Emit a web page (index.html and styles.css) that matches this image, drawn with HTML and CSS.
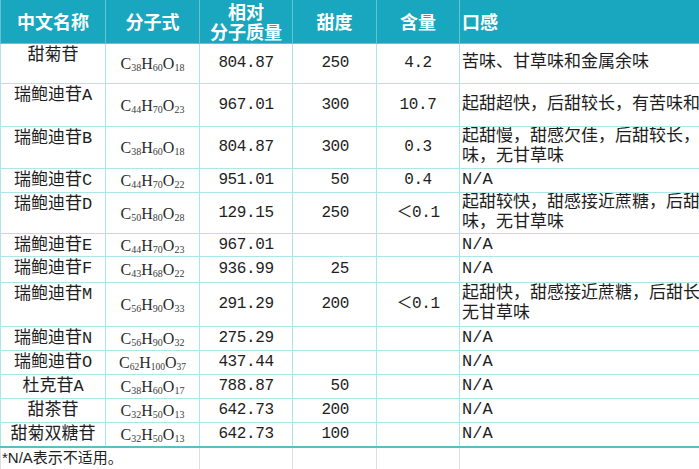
FILE: index.html
```html
<!DOCTYPE html>
<html lang="zh">
<head>
<meta charset="utf-8">
<link rel="stylesheet" href="styles.css">
</head>
<body>
<table class="tbl">
  <colgroup>
    <col class="c-name"><col class="c-formula"><col class="c-mass"><col class="c-sweet"><col class="c-amount"><col class="c-taste">
  </colgroup>
  <thead>
    <tr class="r43 head">
      <th>中文名称</th>
      <th>分子式</th>
      <th class="two">相对<br>分子质量</th>
      <th>甜度</th>
      <th>含量</th>
      <th class="left">口感</th>
    </tr>
  </thead>
  <tbody>
    <tr class="r40">
      <td class="name">甜菊苷</td>
      <td class="f">C<sub>38</sub>H<sub>60</sub>O<sub>18</sub></td>
      <td class="num">804.87</td>
      <td class="sw">250</td>
      <td class="num">4.2</td>
      <td class="taste">苦味、甘草味和金属余味</td>
    </tr>
    <tr class="r43">
      <td class="name">瑞鲍迪苷A</td>
      <td class="f">C<sub>44</sub>H<sub>70</sub>O<sub>23</sub></td>
      <td class="num">967.01</td>
      <td class="sw">300</td>
      <td class="num">10.7</td>
      <td class="taste">起甜超快，后甜较长，有苦味和甘草味</td>
    </tr>
    <tr class="r42">
      <td class="name">瑞鲍迪苷B</td>
      <td class="f">C<sub>38</sub>H<sub>60</sub>O<sub>18</sub></td>
      <td class="num">804.87</td>
      <td class="sw">300</td>
      <td class="num">0.3</td>
      <td class="taste two-line">起甜慢，甜感欠佳，后甜较长，有苦<br>味，无甘草味</td>
    </tr>
    <tr class="r24">
      <td class="name">瑞鲍迪苷C</td>
      <td class="f">C<sub>44</sub>H<sub>70</sub>O<sub>22</sub></td>
      <td class="num">951.01</td>
      <td class="sw">50</td>
      <td class="num">0.4</td>
      <td class="taste">N/A</td>
    </tr>
    <tr class="r41">
      <td class="name">瑞鲍迪苷D</td>
      <td class="f">C<sub>50</sub>H<sub>80</sub>O<sub>28</sub></td>
      <td class="num">129.15</td>
      <td class="sw">250</td>
      <td class="num">＜0.1</td>
      <td class="taste two-line">起甜较快，甜感接近蔗糖，后甜较长，无苦<br>味，无甘草味</td>
    </tr>
    <tr class="r23">
      <td class="name">瑞鲍迪苷E</td>
      <td class="f">C<sub>44</sub>H<sub>70</sub>O<sub>23</sub></td>
      <td class="num">967.01</td>
      <td class="sw"></td>
      <td class="num"></td>
      <td class="taste">N/A</td>
    </tr>
    <tr class="r26">
      <td class="name">瑞鲍迪苷F</td>
      <td class="f">C<sub>43</sub>H<sub>68</sub>O<sub>22</sub></td>
      <td class="num">936.99</td>
      <td class="sw">25</td>
      <td class="num"></td>
      <td class="taste">N/A</td>
    </tr>
    <tr class="r44">
      <td class="name">瑞鲍迪苷M</td>
      <td class="f">C<sub>56</sub>H<sub>90</sub>O<sub>33</sub></td>
      <td class="num">291.29</td>
      <td class="sw">200</td>
      <td class="num">＜0.1</td>
      <td class="taste two-line">起甜快，甜感接近蔗糖，后甜长，无苦味，<br>无甘草味</td>
    </tr>
    <tr class="r24">
      <td class="name">瑞鲍迪苷N</td>
      <td class="f">C<sub>56</sub>H<sub>90</sub>O<sub>32</sub></td>
      <td class="num">275.29</td>
      <td class="sw"></td>
      <td class="num"></td>
      <td class="taste">N/A</td>
    </tr>
    <tr class="r24">
      <td class="name">瑞鲍迪苷O</td>
      <td class="f f-long">C<sub>62</sub>H<sub>100</sub>O<sub>37</sub></td>
      <td class="num">437.44</td>
      <td class="sw"></td>
      <td class="num"></td>
      <td class="taste">N/A</td>
    </tr>
    <tr class="r24">
      <td class="name">杜克苷A</td>
      <td class="f">C<sub>38</sub>H<sub>60</sub>O<sub>17</sub></td>
      <td class="num">788.87</td>
      <td class="sw">50</td>
      <td class="num"></td>
      <td class="taste">N/A</td>
    </tr>
    <tr class="r24">
      <td class="name">甜茶苷</td>
      <td class="f">C<sub>32</sub>H<sub>50</sub>O<sub>13</sub></td>
      <td class="num">642.73</td>
      <td class="sw">200</td>
      <td class="num"></td>
      <td class="taste">N/A</td>
    </tr>
    <tr class="r25 last">
      <td class="name">甜菊双糖苷</td>
      <td class="f">C<sub>32</sub>H<sub>50</sub>O<sub>13</sub></td>
      <td class="num">642.73</td>
      <td class="sw">100</td>
      <td class="num"></td>
      <td class="taste">N/A</td>
    </tr>
    <tr class="r22 foot">
      <td colspan="2" class="note">*N/A表示不适用。</td>
      <td></td>
      <td></td>
      <td></td>
      <td></td>
    </tr>
  </tbody>
</table>
</body>
</html>
```

FILE: styles.css
```css
html, body {
  margin: 0;
  padding: 0;
  background: #ffffff;
  overflow: hidden;
  width: 699px;
  height: 469px;
}

.tbl {
  border-collapse: collapse;
  table-layout: fixed;
  width: 780px;
  color: #1e1e1e;
  font-family: "Liberation Mono", "Noto Sans CJK SC", monospace;
  font-size: 16px;
  line-height: 18px;
}

.c-name { width: 105px; }
.c-formula { width: 94px; }
.c-mass { width: 93px; }
.c-sweet { width: 84px; }
.c-amount { width: 83px; }
.c-taste { width: 321px; }

.tbl td,
.tbl th {
  border: 1px solid #ade6e8;
  padding: 0 2px;
  white-space: nowrap;
  vertical-align: middle;
  text-align: center;
}

.tbl td {
  overflow: hidden;
}

.head th {
  background: #19a7bf;
  color: #ffffff;
  font-family: "Noto Sans CJK SC", sans-serif;
  font-weight: 700;
  font-size: 18px;
  line-height: 22px;
  border-color: #62c3d3;
  border-top: none;
}

.head th.two {
  line-height: 20px;
  padding: 0 2px;
}

.head th.left {
  text-align: left;
}

.r44 { height: 44px; }
.r43 { height: 43px; }
.r42 { height: 42px; }
.r41 { height: 41px; }
.r40 { height: 40px; }
.r26 { height: 26px; }
.r25 { height: 25px; }
.r24 { height: 24px; }
.r23 { height: 23px; }
.r22 { height: 22px; }

.tbl td.name {
  vertical-align: top;
  font-size: 17px;
  line-height: 21px;
  padding-top: 1px;
}

.f {
  font-family: "Liberation Serif", serif;
  font-size: 16px;
  color: #2a2a2a;
}

.tbl td.f {
  line-height: 18px;
  padding-top: 2px;
}

.f sub {
  font-size: 10px;
  vertical-align: -2px;
  line-height: 0;
  color: #3a3a3a;
}

.f-long sub {
  font-size: 9.5px;
}

.num {
  font-size: 16px;
  letter-spacing: -0.4px;
}

.tbl td.sw {
  text-align: right;
  padding-right: 27px;
  letter-spacing: -0.4px;
}

.tbl td.taste {
  text-align: left;
  font-size: 17px;
  line-height: 20px;
  padding-left: 2px;
}

.tbl td.two-line {
  line-height: 20px;
  padding-top: 0;
}

.last td {
  border-bottom: 2px solid #58bfc8;
}

.foot td {
  border-color: #dedede;
  border-top: 2px solid #58bfc8;
}

.tbl td.note {
  text-align: left;
  font-family: "Liberation Sans", "Noto Sans CJK SC", sans-serif;
  font-size: 15px;
  line-height: 18px;
  padding-left: 1px;
}
```
